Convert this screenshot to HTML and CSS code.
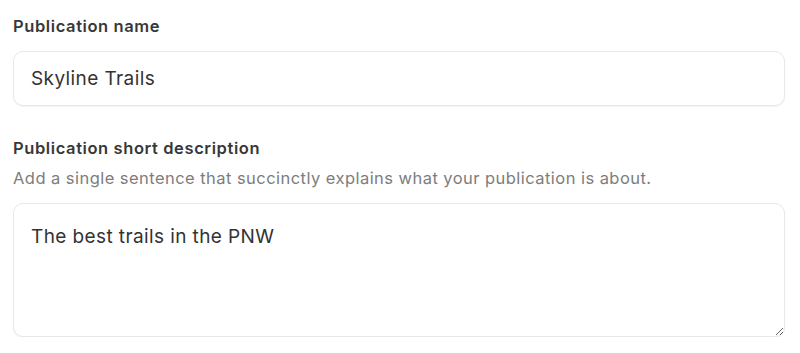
FILE: index.html
```html
<!DOCTYPE html>
<html>
<head>
<meta charset="utf-8">
<link rel="stylesheet" href="styles.css">
</head>
<body>
<form class="form">
  <div class="field">
    <label class="label" for="name">Publication name</label>
    <input class="input" id="name" type="text" value="Skyline Trails">
  </div>
  <div class="field field-desc">
    <label class="label" for="desc">Publication short description</label>
    <p class="help">Add a single sentence that succinctly explains what your publication is about.</p>
    <textarea class="textarea" id="desc">The best trails in the PNW</textarea>
  </div>
</form>
</body>
</html>
```
FILE: styles.css
```css
html, body {
  margin: 0;
  padding: 0;
  background: #ffffff;
}
body {
  font-family: Inter, "Noto Sans", sans-serif;
  color: #363636;
}
.form {
  padding: 15px 15px 0 13px;
  display: flex;
  flex-direction: column;
  gap: 31px;
}
.field {
  display: flex;
  flex-direction: column;
}
.label {
  font-size: 16.5px;
  font-weight: 600;
  letter-spacing: 0.6px;
  line-height: 22px;
  color: #383838;
  margin-bottom: 14px;
}
.field-desc .label {
  margin-bottom: 8px;
}
.help {
  margin: 0 0 14px 0;
  font-size: 16.5px;
  letter-spacing: 0.45px;
  line-height: 22px;
  color: #7d7d7d;
}
.input, .textarea {
  box-sizing: border-box;
  width: 100%;
  border: 1px solid #e8e8e8;
  border-radius: 10px;
  box-shadow: 0 1px 1px rgba(0,0,0,0.05);
  font-family: Inter, "Noto Sans", sans-serif;
  font-size: 19px;
  letter-spacing: 0.4px;
  color: #333333;
  background: #ffffff;
  outline: none;
}
.input {
  height: 55px;
  padding: 0 17px;
}
.textarea {
  height: 134px;
  padding: 20px 17px;
  line-height: 26px;
  resize: vertical;
  display: block;
}
```
